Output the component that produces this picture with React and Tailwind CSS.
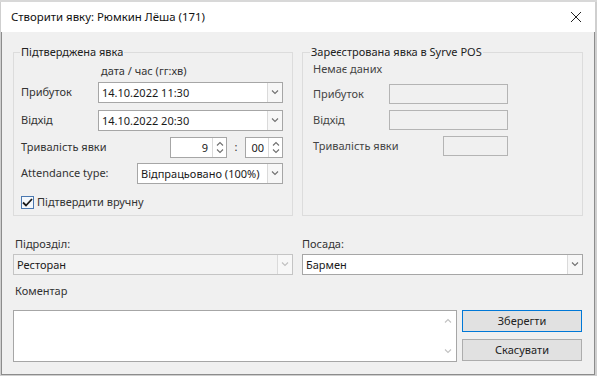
import React from "react";

const font = { fontFamily: '"Noto Sans", "Liberation Sans", sans-serif' };

const Chevron = ({ up = false, color = "#707070" }) => (
  <svg width="8" height="5" viewBox="0 0 8 5">
    <path
      d={up ? "M1 4.5 L4 1.5 L7 4.5" : "M1 0.5 L4 3.5 L7 0.5"}
      fill="none"
      stroke={color}
      strokeWidth="1.1"
    />
  </svg>
);

const Combo = ({ value, className = "", disabled = false }) => (
  <div
    className={
      "flex h-[21px] border " +
      (disabled
        ? "border-[#c4c4c4] bg-[#f3f3f3] "
        : "border-[#a6a6a6] bg-white ") +
      className
    }
  >
    <div className="flex-1 overflow-hidden whitespace-nowrap pl-[3px] leading-[19px] text-[#1a1a1a]">
      {value}
    </div>
    <div className="flex w-[15px] items-center justify-center border-l border-[#dadada] bg-[#f7f7f7]">
      <Chevron color={disabled ? "#c0c0c0" : "#707070"} />
    </div>
  </div>
);

const Spin = ({ value, className = "" }) => (
  <div className={"flex h-[21px] border border-[#a6a6a6] bg-white " + className}>
    <div className="flex-1 pr-[4px] text-right leading-[19px] text-[#1a1a1a]">
      {value}
    </div>
    <div className="flex w-[14px] flex-col items-center justify-center gap-[3px] border-l border-[#dadada]">
      <Chevron up />
      <Chevron />
    </div>
  </div>
);

const EmptyBox = ({ className = "" }) => (
  <div className={"h-[20px] border border-[#b4b4b4] " + className} />
);

export default function App() {
  return (
    <div
      className="flex h-[376px] w-[597px] flex-col whitespace-nowrap bg-[#cfcfcf] text-[11px] text-[#333]"
      style={font}
    >
      <div className="h-[2px] bg-[#d8d8d8]" />
      <div className="ml-[1px] flex w-[594px] flex-col">
        {/* title bar */}
        <div className="flex h-[30px] items-center justify-between bg-white pl-[10px] pr-[10px]">
          <span className="text-[11.4px] text-[#111]">
            Створити явку: Рюмкин Лёша (171)
          </span>
          <svg width="12" height="12" viewBox="0 0 12 12" className="mr-[3px]">
            <path d="M1 1 L11 11 M11 1 L1 11" stroke="#222" strokeWidth="1" />
          </svg>
        </div>

        {/* body */}
        <div className="flex h-[343px] flex-col border-x border-b border-[#8c8c8c] bg-[#f0f0f0] px-[11px] pt-[12px]">
          <div className="grid grid-cols-[280px_281px] gap-[9px]">
            <fieldset className="h-[172px] border border-[#dcdcdc]">
              <legend className="ml-[6px] px-[1px] leading-[16px] text-[#222]">
                Підтверджена явка
              </legend>
              <div className="pl-[7px]">
                <div className="ml-[80px] mt-[3px] leading-[16px]">
                  дата / час (гг:хв)
                </div>
                <div className="mt-[3px] flex items-center">
                  <div className="w-[77px]">Прибуток</div>
                  <Combo value="14.10.2022 11:30" className="w-[185px]" />
                </div>
                <div className="mt-[7px] flex items-center">
                  <div className="w-[77px]">Відхід</div>
                  <Combo value="14.10.2022 20:30" className="w-[185px]" />
                </div>
                <div className="mt-[6px] flex items-center">
                  <div className="w-[149px]">Тривалість явки</div>
                  <Spin value="9" className="w-[57px]" />
                  <div className="w-[18px] text-center">:</div>
                  <Spin value="00" className="w-[38px]" />
                </div>
                <div className="mt-[5px] flex items-center">
                  <div className="w-[116px]">Attendance type:</div>
                  <Combo value="Відпрацьовано (100%)" className="w-[146px]" />
                </div>
                <div className="mt-[11px] flex items-center">
                  <div className="flex h-[13px] w-[13px] items-center justify-center border border-[#4a78b0] bg-[#f4f8fc]">
                    <svg width="11" height="9" viewBox="0 0 11 9">
                      <path
                        d="M1 4.5 L4 7.5 L10 1"
                        fill="none"
                        stroke="#1a1a1a"
                        strokeWidth="1.8"
                      />
                    </svg>
                  </div>
                  <span className="ml-[3px] leading-[14px]">Підтвердити вручну</span>
                </div>
              </div>
            </fieldset>

            <fieldset className="h-[172px] border border-[#dcdcdc]">
              <legend className="ml-[7px] px-[1px] leading-[16px] text-[#222]">
                Зареєстрована явка в Syrve POS
              </legend>
              <div className="pl-[10px] text-[#444]">
                <div className="mt-[1px] leading-[16px]">Немає даних</div>
                <div className="mt-[7px] flex items-center">
                  <div className="w-[76px]">Прибуток</div>
                  <EmptyBox className="w-[119px]" />
                </div>
                <div className="mt-[6px] flex items-center">
                  <div className="w-[76px]">Відхід</div>
                  <EmptyBox className="w-[119px]" />
                </div>
                <div className="mt-[6px] flex items-center">
                  <div className="w-[130px]">Тривалість явки</div>
                  <EmptyBox className="w-[65px]" />
                </div>
              </div>
            </fieldset>
          </div>

          <div className="mt-[20px] grid grid-cols-[280px_281px] gap-[9px]">
            <div>
              <div className="pl-[2px] leading-[16px]">Підрозділ:</div>
              <Combo value="Ресторан" disabled className="mt-[2px]" />
            </div>
            <div>
              <div className="leading-[16px]">Посада:</div>
              <Combo value="Бармен" className="mt-[2px]" />
            </div>
          </div>

          <div className="mt-[8px] pl-[2px] leading-[16px]">Коментар</div>

          <div className="mt-[11px] flex gap-[5px]">
            <div className="flex h-[52px] w-[444px] border border-[#a6a6a6] bg-white">
              <div className="flex-1" />
              <div className="flex w-[17px] flex-col items-center justify-between py-[7px]">
                <Chevron up color="#c2c2c2" />
                <Chevron color="#c2c2c2" />
              </div>
            </div>
            <div className="flex w-[120px] flex-col gap-[7px]">
              <button className="h-[22px] border border-[#0078d7] bg-[#e1e1e1] text-[#222]">
                Зберегти
              </button>
              <button className="h-[22px] border border-[#adadad] bg-[#e1e1e1] text-[#222]">
                Скасувати
              </button>
            </div>
          </div>
        </div>
      </div>
    </div>
  );
}
